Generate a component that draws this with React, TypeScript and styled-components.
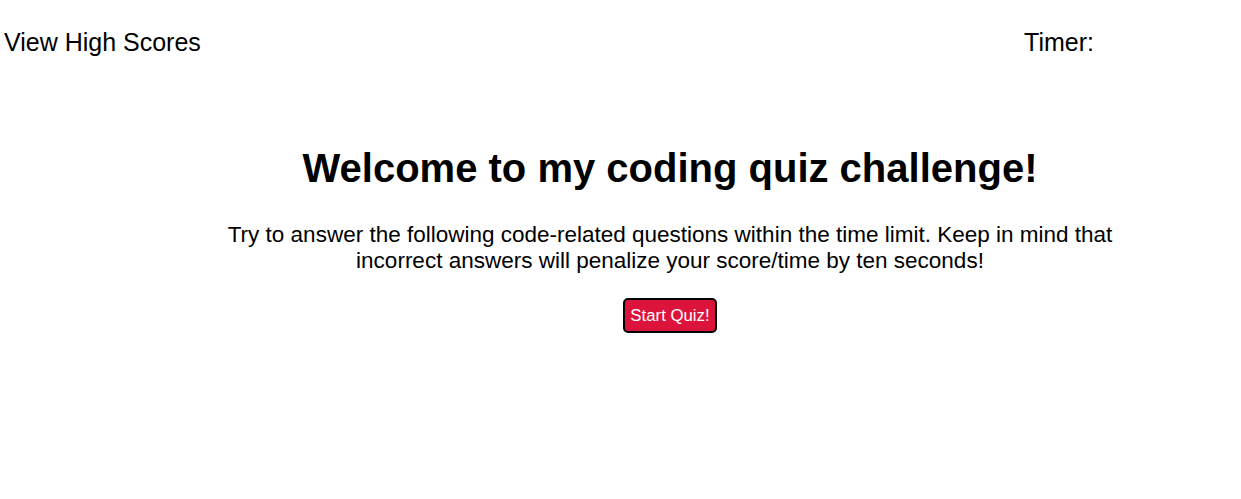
import React from "react";
import styled, { createGlobalStyle } from "styled-components";

const GlobalStyle = createGlobalStyle`
  html, body {
    margin: 0;
    padding: 0;
    background: #ffffff;
    font-family: "Liberation Sans", Arial, sans-serif;
    color: #000000;
  }
`;

const Header = styled.header`
  display: flex;
  justify-content: space-between;
  align-items: center;
  padding: 28px 147px 0 4px;
  font-size: 25px;
  line-height: 29px;
`;

const HeaderLink = styled.a`
  color: #000000;
  text-decoration: none;
  cursor: pointer;
`;

const Timer = styled.div`
  white-space: nowrap;
`;

const Main = styled.main`
  display: flex;
  flex-direction: column;
  align-items: center;
  margin-left: 99px;
  padding-top: 88px;
  text-align: center;
`;

const Title = styled.h1`
  margin: 0;
  font-size: 40px;
  font-weight: bold;
  line-height: 46px;
`;

const Intro = styled.p`
  margin: 31px 0 0;
  max-width: 910px;
  font-size: 22.5px;
  line-height: 26px;
`;

const StartButton = styled.button`
  margin-top: 24px;
  padding: 6px 5px;
  background: #dc143c;
  color: #ffffff;
  border: 2px solid #000000;
  border-radius: 5px;
  font-family: "Liberation Sans", Arial, sans-serif;
  font-size: 16.8px;
  line-height: 19px;
  cursor: pointer;
`;

export default function App() {
  return (
    <>
      <GlobalStyle />
      <Header>
        <HeaderLink>View High Scores</HeaderLink>
        <Timer>Timer: </Timer>
      </Header>
      <Main>
        <Title>Welcome to my coding quiz challenge!</Title>
        <Intro>
          Try to answer the following code-related questions within the time
          limit. Keep in mind that incorrect answers will penalize your
          score/time by ten seconds!
        </Intro>
        <StartButton>Start Quiz!</StartButton>
      </Main>
    </>
  );
}
